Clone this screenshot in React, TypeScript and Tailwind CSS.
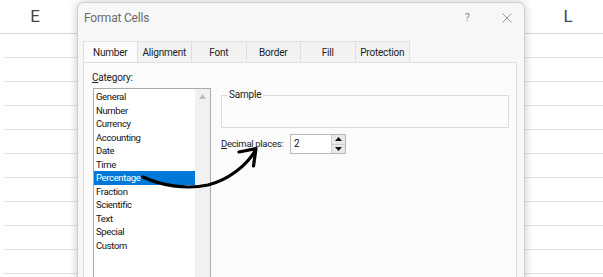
import React from "react"

const categories = [
  "General",
  "Number",
  "Currency",
  "Accounting",
  "Date",
  "Time",
  "Percentage",
  "Fraction",
  "Scientific",
  "Text",
  "Special",
  "Custom",
]

const tabs = ["Number", "Alignment", "Font", "Border", "Fill", "Protection"]

function SheetBackground() {
  return (
    <div className="flex flex-col w-full">
      <div className="flex justify-between h-[34px] border-b border-[#d6d6d6] pl-[4px]">
        <div className="w-[62px] flex items-center justify-center text-[17px] text-[#444]">E</div>
        <div className="w-[70px] flex items-center justify-center text-[17px] text-[#444]">L</div>
      </div>
      {Array.from({ length: 10 }).map((_, i) => (
        <div key={i} className="h-[24px] ml-[4px] border-b border-[#e3e3e3]" />
      ))}
    </div>
  )
}

function Spinner() {
  return (
    <div className="flex flex-col w-[14px] border-l border-[#d0d0d0]">
      <div className="flex-1 flex items-center justify-center bg-[#e8e8e8] border-b border-[#cfcfcf]">
        <svg width="7" height="4" viewBox="0 0 7 4">
          <path d="M0 4 L3.5 0 L7 4 Z" fill="#111" />
        </svg>
      </div>
      <div className="flex-1 flex items-center justify-center bg-[#e8e8e8]">
        <svg width="7" height="4" viewBox="0 0 7 4">
          <path d="M0 0 L3.5 4 L7 0 Z" fill="#111" />
        </svg>
      </div>
    </div>
  )
}

function FormatCellsDialog() {
  return (
    <div className="absolute left-[77px] top-[2px] w-[448px] h-[300px] bg-[#f7f7f7] rounded-t-[7px] border border-[#cfcfcf] shadow-[0_0_10px_rgba(0,0,0,0.22)] flex flex-col">
      <div className="h-[36px] flex items-center justify-between pl-[6px] pr-[12px] pb-[6px]">
        <span className="text-[12px] text-[#6b6b6b] tracking-[-0.2px]">Format Cells</span>
        <div className="flex items-center gap-[32px] text-[#8a8a8a]">
          <span className="text-[11px]">?</span>
          <svg width="10" height="10" viewBox="0 0 10 10">
            <path d="M0.5 0.5 L9.5 9.5 M9.5 0.5 L0.5 9.5" stroke="#8a8a8a" strokeWidth="0.9" />
          </svg>
        </div>
      </div>

      <div className="flex pl-[5px] mt-[2px]">
        {tabs.map((t, i) => (
          <div
            key={t}
            className={
              i === 0
                ? "w-[54.5px] h-[21px] flex items-center justify-center text-[10px] tracking-[-0.2px] text-[#222] bg-[#fbfbfb] border-t border-l border-r border-[#e0e0e0] -mb-px z-10"
                : "w-[54.5px] h-[21px] flex items-center justify-center text-[10px] tracking-[-0.2px] text-[#222] bg-[#f2f2f2] border-t border-r border-[#e0e0e0]"
            }
          >
            {t}
          </div>
        ))}
      </div>

      <div className="flex-1 ml-[5px] mr-[7px] bg-[#fbfbfb] border border-[#e0e0e0] flex gap-[10px] pl-[8px] pr-[7px] pt-[9px]">
        <div className="w-[119px] flex flex-col">
          <div className="text-[10px] leading-[12px] tracking-[-0.2px] text-[#222]">
            <span className="underline">C</span>ategory:
          </div>
          <div className="mt-[4px] ml-[1px] flex-1 flex bg-white border border-[#ababab]">
            <div className="flex-1 flex flex-col pt-[1px]">
              {categories.map((c) => (
                <div
                  key={c}
                  className={
                    c === "Percentage"
                      ? "h-[13.5px] leading-[13.5px] pl-[2px] text-[9.5px] tracking-[-0.35px] bg-[#0078d7] text-white"
                      : "h-[13.5px] leading-[13.5px] pl-[2px] text-[9.5px] tracking-[-0.35px] text-[#111]"
                  }
                >
                  {c}
                </div>
              ))}
            </div>
            <div className="w-[15px] bg-[#f1f1f1] flex justify-center pt-[5px]">
              <svg width="7" height="5" viewBox="0 0 7 5">
                <path d="M0 5 L3.5 0 L7 5 Z" fill="#bdbdbd" />
              </svg>
            </div>
          </div>
        </div>

        <div className="flex-1 flex flex-col pt-[18px]">
          <fieldset className="h-[38px] border border-[#dcdcdc] pl-[5px]">
            <legend className="px-[2px] text-[10px] leading-[10px] tracking-[-0.2px] text-[#222]">Sample</legend>
          </fieldset>
          <div className="flex items-center mt-[6px]">
            <span className="w-[69px] whitespace-nowrap text-[9.5px] tracking-[-0.3px] text-[#222]">
              <span className="underline">D</span>ecimal places:
            </span>
            <div className="w-[56px] h-[20px] flex bg-white border border-[#b8b8b8]">
              <span className="flex-1 pl-[3px] text-[10px] leading-[18px] text-[#111]">2</span>
              <Spinner />
            </div>
          </div>
        </div>
      </div>
    </div>
  )
}

export default function App() {
  return (
    <div
      className="relative w-[603px] h-[277px] overflow-hidden bg-white"
      style={{ fontFamily: "Roboto, 'Noto Sans', sans-serif" }}
    >
      <SheetBackground />
      <FormatCellsDialog />
      <svg className="absolute left-0 top-0 pointer-events-none" width="603" height="277" viewBox="0 0 603 277">
        <path
          d="M143 177 C 160 185, 185 190, 208 185 C 228 180, 246 166, 255 151"
          fill="none"
          stroke="#000"
          strokeWidth="3.2"
          strokeLinecap="round"
        />
        <path
          d="M239 152 L 256 148.5 L 253.5 166"
          fill="none"
          stroke="#000"
          strokeWidth="3.2"
          strokeLinecap="round"
          strokeLinejoin="round"
        />
      </svg>
    </div>
  )
}
